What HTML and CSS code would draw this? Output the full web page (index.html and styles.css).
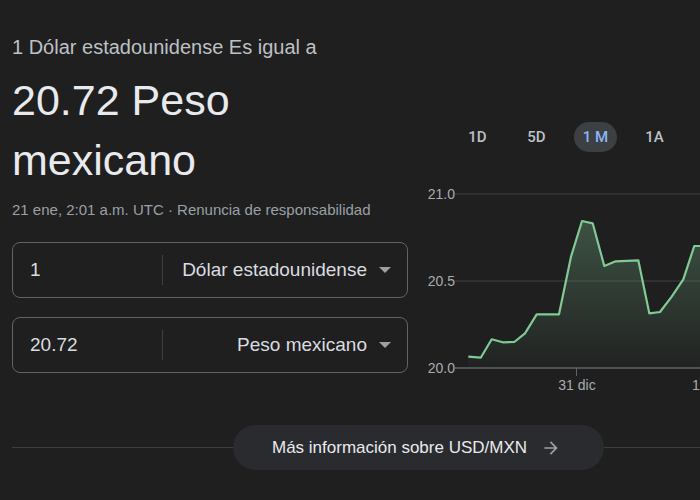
FILE: index.html
```html
<!DOCTYPE html>
<html lang="es">
<head>
<meta charset="utf-8">
<link rel="stylesheet" href="styles.css">
</head>
<body>
<main class="page">
  <div class="top">
    <section class="left">
      <p class="equal">1 Dólar estadounidense Es igual a</p>
      <h1 class="result">20.72 Peso<br>mexicano</h1>
      <p class="meta">21 ene, 2:01 a.m. UTC · <span class="disclaimer">Renuncia de responsabilidad</span></p>
      <div class="field">
        <span class="amount">1</span>
        <span class="sep"></span>
        <span class="currency">Dólar estadounidense</span>
        <span class="caret"></span>
      </div>
      <div class="field">
        <span class="amount">20.72</span>
        <span class="sep"></span>
        <span class="currency">Peso mexicano</span>
        <span class="caret"></span>
      </div>
    </section>
    <section class="right">
      <div class="tabs">
        <span class="tab">1D</span>
        <span class="tab">5D</span>
        <span class="tab active">1 M</span>
        <span class="tab">1A</span>
      </div>
      <svg class="chart" width="280" height="215" viewBox="0 0 280 215">
        <defs>
          <linearGradient id="fill" x1="0" y1="0" x2="0" y2="1">
            <stop offset="0" stop-color="#81c995" stop-opacity="0.3"/>
            <stop offset="1" stop-color="#81c995" stop-opacity="0.02"/>
          </linearGradient>
        </defs>
        <line x1="35" y1="14" x2="280" y2="14" stroke="#3c4043" stroke-width="1"/>
        <line x1="35" y1="101" x2="280" y2="101" stroke="#3c4043" stroke-width="1"/>
        <polygon fill="url(#fill)" points="48.3,176.7 60.7,177.7 71.7,159.3 82.7,162.3 94.3,162 105,153.3 116.7,134.3 139,134.3 151,76.7 162,41 172.7,43.3 184.3,86 195.7,81.3 218.3,80.3 229.3,133.3 240,132 251.7,116.7 263.3,99.3 274.3,66 280,66 280,188 48.3,188"/>
        <line x1="35" y1="188" x2="280" y2="188" stroke="#5f6368" stroke-width="1.5"/>
        <line x1="156.5" y1="188" x2="156.5" y2="196" stroke="#5f6368" stroke-width="1"/>
        <polyline fill="none" stroke="#81c995" stroke-width="2.2" stroke-linejoin="round" points="48.3,176.7 60.7,177.7 71.7,159.3 82.7,162.3 94.3,162 105,153.3 116.7,134.3 139,134.3 151,76.7 162,41 172.7,43.3 184.3,86 195.7,81.3 218.3,80.3 229.3,133.3 240,132 251.7,116.7 263.3,99.3 274.3,66 280,66"/>
        <text class="axis" x="35" y="19" text-anchor="end">21.0</text>
        <text class="axis" x="35" y="106" text-anchor="end">20.5</text>
        <text class="axis" x="35" y="193" text-anchor="end">20.0</text>
        <text class="axis" x="157" y="210" text-anchor="middle">31 dic</text>
        <text class="axis" x="272" y="210">1</text>
      </svg>
    </section>
  </div>
  <div class="more">
    <span class="rule"></span>
    <a class="more-btn" href="#">
      <span>Más información sobre USD/MXN</span>
      <svg class="arrow" width="20" height="20" viewBox="0 0 24 24"><path d="M12 4l-1.41 1.41L16.17 11H4v2h12.17l-5.58 5.59L12 20l8-8z" fill="#9aa0a6"/></svg>
    </a>
    <span class="rule"></span>
  </div>
</main>
</body>
</html>
```

FILE: styles.css
```css
html, body {
  margin: 0;
  padding: 0;
  background: #1f1f1f;
  overflow: hidden;
}
body {
  width: 700px;
  height: 500px;
  font-family: "Liberation Sans", Arial, sans-serif;
  color: #e8eaed;
}
.page {
  width: 825px;
}
.top {
  display: flex;
  align-items: flex-start;
}
.left {
  width: 396px;
  padding: 35px 0 0 12px;
  flex: none;
}
.equal {
  margin: 0;
  font-size: 20px;
  line-height: 24px;
  color: #bdc1c6;
}
.result {
  margin: 11px 0 0;
  font-size: 43px;
  line-height: 60px;
  font-weight: 400;
  color: #e8eaed;
}
.meta {
  margin: 10px 0 0;
  font-size: 15px;
  line-height: 20px;
  color: #9aa0a6;
}
.field {
  display: flex;
  align-items: center;
  height: 54px;
  margin-top: 22px;
  border: 1px solid #5f6368;
  border-radius: 8px;
  font-size: 19px;
  color: #dadce0;
}
.field + .field {
  margin-top: 19px;
}
.amount {
  width: 132px;
  padding-left: 17px;
  flex: none;
}
.sep {
  width: 1px;
  height: 30px;
  background: #3c4043;
  flex: none;
}
.currency {
  flex: 1;
  text-align: right;
  padding-right: 12px;
}
.caret {
  width: 0;
  height: 0;
  border-left: 6px solid transparent;
  border-right: 6px solid transparent;
  border-top: 6px solid #9aa0a6;
  margin-right: 16px;
}
.right {
  padding: 122px 0 0 12px;
  width: 280px;
  flex: none;
}
.tabs {
  display: flex;
  gap: 16px;
  padding-left: 36px;
}
.tab {
  width: 43px;
  height: 30px;
  border-radius: 15px;
  display: flex;
  align-items: center;
  justify-content: center;
  font-family: Roboto, "Liberation Sans", sans-serif;
  font-weight: 500;
  font-size: 15px;
  color: #bdc1c6;
  flex: none;
}
.tab.active {
  background: #3c4043;
  color: #8ab4f8;
}
.chart {
  display: block;
  margin-top: 28px;
}
.axis {
  font-family: "Liberation Sans", Arial, sans-serif;
  font-size: 14px;
  fill: #a8acb1;
}
.more {
  display: flex;
  align-items: center;
  width: 813px;
  padding-left: 12px;
  margin-top: 30px;
}
.rule {
  flex: 1;
  height: 1px;
  background: #3c4043;
}
.more-btn {
  display: flex;
  align-items: center;
  gap: 14px;
  height: 45px;
  padding: 0 43px 0 39px;
  border-radius: 23px;
  background: #2a2b2e;
  color: #e8eaed;
  text-decoration: none;
  font-size: 17px;
  flex: none;
}
.arrow {
  display: block;
}
```
